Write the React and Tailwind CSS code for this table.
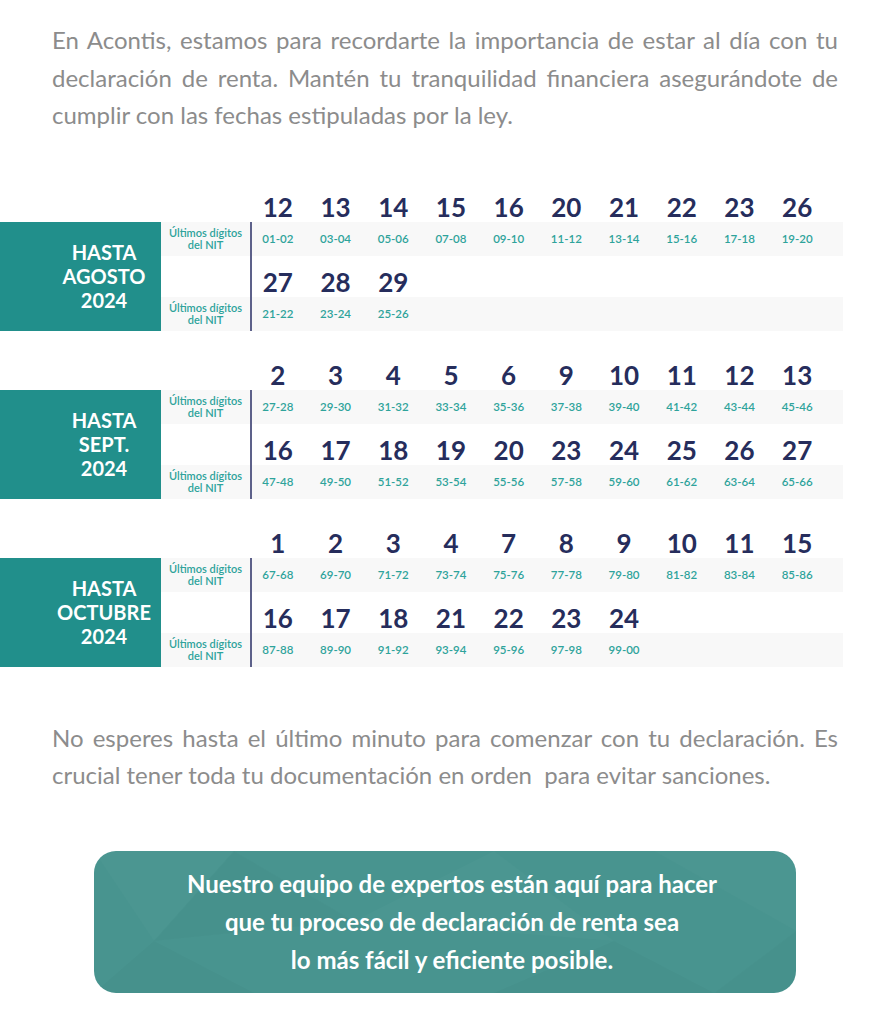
const sections = [
  {
    label: ["HASTA", "AGOSTO", "2024"],
    rows: [
      {
        days: [12, 13, 14, 15, 16, 20, 21, 22, 23, 26],
        ranges: ["01-02", "03-04", "05-06", "07-08", "09-10", "11-12", "13-14", "15-16", "17-18", "19-20"],
      },
      { days: [27, 28, 29], ranges: ["21-22", "23-24", "25-26"] },
    ],
  },
  {
    label: ["HASTA", "SEPT.", "2024"],
    rows: [
      {
        days: [2, 3, 4, 5, 6, 9, 10, 11, 12, 13],
        ranges: ["27-28", "29-30", "31-32", "33-34", "35-36", "37-38", "39-40", "41-42", "43-44", "45-46"],
      },
      {
        days: [16, 17, 18, 19, 20, 23, 24, 25, 26, 27],
        ranges: ["47-48", "49-50", "51-52", "53-54", "55-56", "57-58", "59-60", "61-62", "63-64", "65-66"],
      },
    ],
  },
  {
    label: ["HASTA", "OCTUBRE", "2024"],
    rows: [
      {
        days: [1, 2, 3, 4, 7, 8, 9, 10, 11, 15],
        ranges: ["67-68", "69-70", "71-72", "73-74", "75-76", "77-78", "79-80", "81-82", "83-84", "85-86"],
      },
      { days: [16, 17, 18, 21, 22, 23, 24], ranges: ["87-88", "89-90", "91-92", "93-94", "95-96", "97-98", "99-00"] },
    ],
  },
];

function Days({ days }) {
  return (
    <div className="ml-[-3px] grid w-[577px] grid-cols-10 items-end pb-[2px]">
      {days.map((d) => (
        <div key={d} className="text-center text-[26px] font-bold leading-[26px] text-[#262d5c]">
          {d}
        </div>
      ))}
    </div>
  );
}

function Ranges({ ranges }) {
  return (
    <div className="flex h-[34px] items-center bg-[#f8f8f8]">
      <div className="ml-[-3px] grid w-[577px] grid-cols-10">
        {ranges.map((r) => (
          <div key={r} className="text-center text-[11.5px] font-semibold text-[#2ea39b]">
            {r}
          </div>
        ))}
      </div>
    </div>
  );
}

function NitLabel() {
  return (
    <div className="flex h-[34px] flex-col items-center justify-center bg-[#f8f8f8] text-center text-[11px] font-semibold leading-[12px] text-[#2ea39b]">
      <span>Últimos dígitos</span>
      <span>del NIT</span>
    </div>
  );
}

function Section({ section, first }) {
  const [top, bottom] = section.rows;
  return (
    <div className={first ? "" : "mt-[29px]"}>
      <div className="flex h-[30px] items-end">
        <div className="w-[252px] shrink-0" />
        <Days days={top.days} />
      </div>
      <div className="flex">
        <div className="flex w-[161px] shrink-0 flex-col items-center justify-center bg-[#218f8b] pl-[47px] text-[20px] font-bold leading-[24px] text-white">
          {section.label.map((l) => (
            <span key={l}>{l}</span>
          ))}
        </div>
        <div className="w-[89px] shrink-0">
          <NitLabel />
          <div className="h-[41px]" />
          <NitLabel />
        </div>
        <div className="w-[2px] shrink-0 bg-[#5d618a]" />
        <div className="w-[591px] shrink-0">
          <Ranges ranges={top.ranges} />
          <div className="flex h-[41px] items-end">
            <Days days={bottom.days} />
          </div>
          <Ranges ranges={bottom.ranges} />
        </div>
      </div>
    </div>
  );
}

export default function App() {
  return (
    <div className="min-h-[1024px] w-[890px] bg-white font-['Lato',sans-serif]">
      <p className="px-[52px] pt-[21px] text-justify text-[24px] font-normal leading-[37.5px] text-[#8c8c8c]">
        En Acontis, estamos para recordarte la importancia de estar al día con tu declaración de renta. Mantén tu
        tranquilidad financiera asegurándote de cumplir con las fechas estipuladas por la ley.
      </p>

      <div className="mt-[58px]">
        {sections.map((s, i) => (
          <Section key={i} section={s} first={i === 0} />
        ))}
      </div>

      <p className="mt-[52px] px-[52px] text-justify text-[24px] font-normal leading-[37.5px] text-[#8c8c8c]">
        No esperes hasta el último minuto para comenzar con tu declaración. Es crucial tener toda tu documentación en
        orden&nbsp; para evitar sanciones.
      </p>

      <div className="relative ml-[94px] mt-[57px] flex h-[142px] w-[702px] items-center justify-center overflow-hidden rounded-[22px] bg-[#48948f]">
        <svg className="absolute inset-0 h-full w-full" viewBox="0 0 702 142" preserveAspectRatio="none">
          <polygon points="0,0 140,0 60,90" fill="#ffffff" fillOpacity="0.02" />
          <polygon points="60,90 0,142 160,142" fill="#000000" fillOpacity="0.02" />
          <polygon points="140,0 260,70 60,90" fill="#000000" fillOpacity="0.015" />
          <polygon points="260,70 400,0 520,90" fill="#ffffff" fillOpacity="0.02" />
          <polygon points="400,142 520,90 620,142" fill="#000000" fillOpacity="0.02" />
          <polygon points="560,0 702,0 702,80" fill="#ffffff" fillOpacity="0.02" />
          <polygon points="620,142 702,80 702,142" fill="#000000" fillOpacity="0.015" />
        </svg>
        <p className="relative pl-[14px] text-center text-[24px] font-bold leading-[38px] text-white">
          Nuestro equipo de expertos están aquí para hacer
          <br />
          que tu proceso de declaración de renta sea
          <br />
          lo más fácil y eficiente posible.
        </p>
      </div>
    </div>
  );
}
